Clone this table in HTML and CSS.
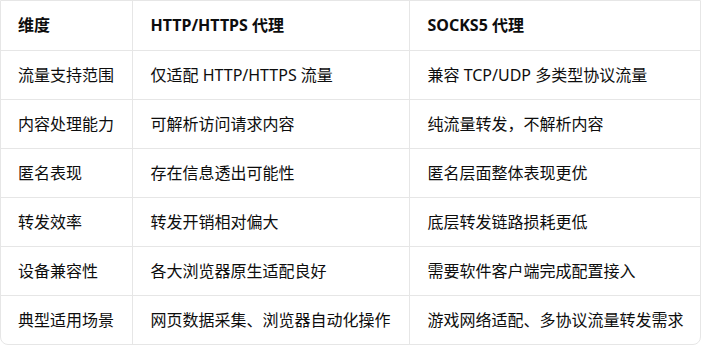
FILE: index.html
```html
<!DOCTYPE html>
<html lang="zh-CN">
<head>
<meta charset="utf-8">
<link rel="stylesheet" href="styles.css">
</head>
<body>
<div class="wrap">
<table class="cmp">
<colgroup><col class="c1"><col class="c2"><col class="c3"></colgroup>
<thead>
<tr><th>维度</th><th>HTTP/HTTPS 代理</th><th>SOCKS5 代理</th></tr>
</thead>
<tbody>
<tr><td>流量支持范围</td><td>仅适配 HTTP/HTTPS 流量</td><td>兼容 TCP/UDP 多类型协议流量</td></tr>
<tr><td>内容处理能力</td><td>可解析访问请求内容</td><td>纯流量转发，不解析内容</td></tr>
<tr><td>匿名表现</td><td>存在信息透出可能性</td><td>匿名层面整体表现更优</td></tr>
<tr><td>转发效率</td><td>转发开销相对偏大</td><td>底层转发链路损耗更低</td></tr>
<tr><td>设备兼容性</td><td>各大浏览器原生适配良好</td><td>需要软件客户端完成配置接入</td></tr>
<tr><td>典型适用场景</td><td>网页数据采集、浏览器自动化操作</td><td>游戏网络适配、多协议流量转发需求</td></tr>
</tbody>
</table>
</div>
</body>
</html>
```
FILE: styles.css
```css
html, body {
  margin: 0;
  padding: 0;
  background: #ffffff;
}
body {
  font-family: "Segoe UI", "Noto Sans", "Noto Sans CJK SC", sans-serif;
  font-size: 16px;
  color: #0d0d0d;
}
.wrap {
  width: 699px;
  border: 1px solid #e6e6e6;
  border-radius: 0 0 8px 8px;
  overflow: hidden;
}
.cmp {
  width: 699px;
  border-collapse: collapse;
  table-layout: fixed;
}
.c1 { width: 131px; }
.c2 { width: 277px; }
.c3 { width: 291px; }
.cmp th, .cmp td {
  box-sizing: border-box;
  height: 49px;
  padding: 0 0 0 17px;
  text-align: left;
  vertical-align: middle;
  border-right: 1px solid #e6e6e6;
  border-bottom: 1px solid #e6e6e6;
  white-space: nowrap;
  line-height: 24px;
}
.cmp th { font-weight: 700; }
.cmp tr > :last-child { border-right: none; }
.cmp tbody tr:last-child td { border-bottom: none; }
.cmp td:nth-child(2), .cmp th:nth-child(2),
.cmp td:nth-child(3), .cmp th:nth-child(3) { padding-left: 18px; }
```
